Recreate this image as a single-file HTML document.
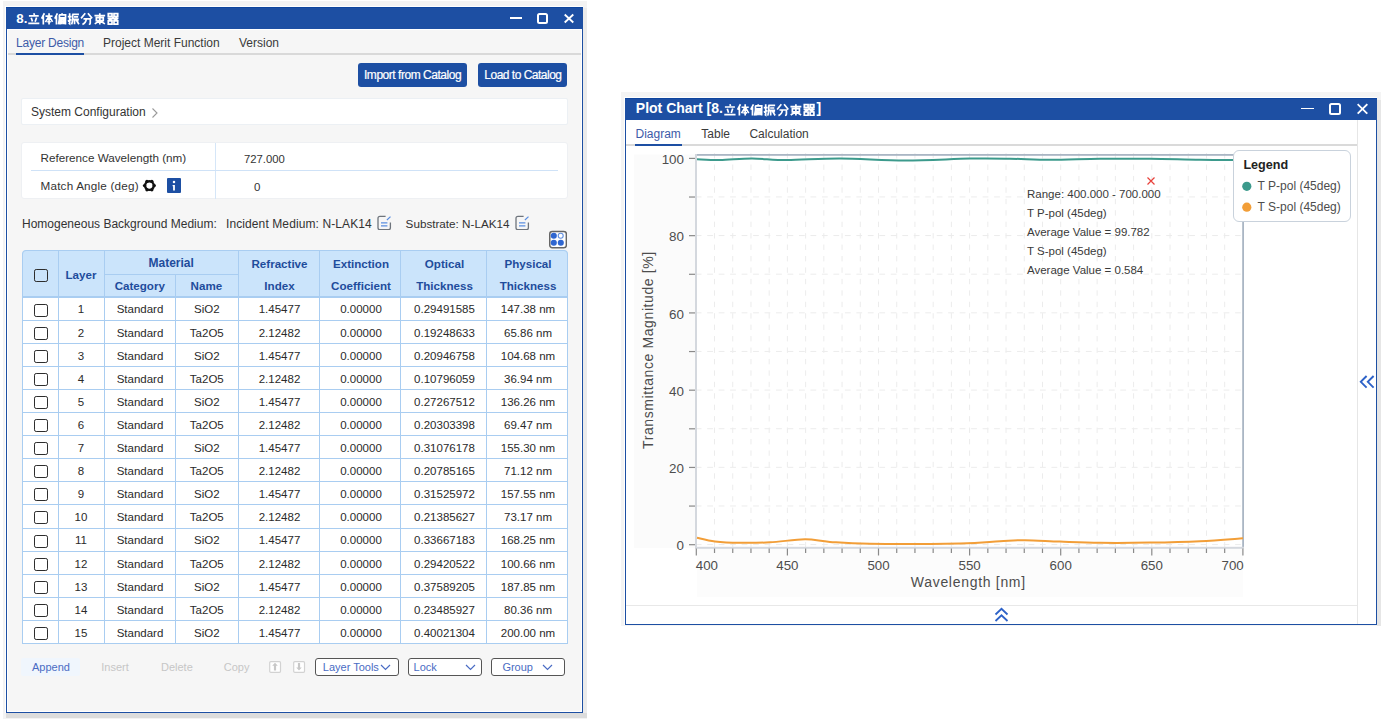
<!DOCTYPE html>
<html><head><meta charset="utf-8">
<style>
*{box-sizing:border-box;margin:0;padding:0}
html,body{width:1384px;height:723px;overflow:hidden;background:#fff;font-family:"Liberation Sans", sans-serif;}
.a{position:absolute;white-space:nowrap}
.t{position:absolute;white-space:nowrap;line-height:1;}
</style></head><body>

<div class="a" style="left:3px;top:1px;width:584px;height:718px;background:#f3f3f3"></div>
<div class="a" style="left:6px;top:713px;width:581px;height:5px;background:#dcdcdc"></div>
<div class="a" style="left:583px;top:8px;width:4px;height:705px;background:#ebebeb"></div>
<div class="a" style="left:5px;top:6px;width:578px;height:707px;background:#fff"></div>
<div class="a" style="left:6px;top:7px;width:577px;height:706px;background:#1d4fa3"></div>
<div class="a" style="left:6px;top:7px;width:577px;height:1px;background:#0e459e"></div>
<div class="a" style="left:7px;top:29px;width:575px;height:683px;background:#fff"></div>
<div class="a" style="left:8px;top:30px;width:573px;height:681px;background:#f6f6f6"></div>
<div class="t" style="left:16.30px;top:11.54px;font-size:13.3px;color:#fff;font-weight:bold;letter-spacing:0px;">8.</div>
<svg class="a" style="left:28.4px;top:13.0px;overflow:visible" width="82.4" height="12.5"><g transform="scale(0.8923076923076922)" fill="none" stroke="#fff" stroke-width="1.91" stroke-linecap="butt"><path transform="translate(0.00,0)" d="M6.5 0.3 L7.2 2.2 M1 3.3 H12 M3.6 5.2 L5 9.6 M9.6 5 L8 9.8 M0.3 11.6 H12.7"/><path transform="translate(14.79,0)" d="M3.6 0.3 L0.4 6.2 M2.4 3.6 V12.8 M4.8 3.6 H12.7 M8.8 0.3 V12.8 M8.6 3.8 L4.8 10.2 M9 3.8 L12.7 10 M6.8 9.8 H10.8"/><path transform="translate(29.59,0)" d="M3.4 0.3 L0.4 6.2 M2.3 3.6 V12.8 M8.6 0.3 V1.8 M5.3 2 H12.5 V5.4 H5.6 M5.6 2 V6.5 L4.6 12.8 M6.6 7 H12.4 V12.8 M6.6 7 V12.8 M8.5 7 V12.5 M10.5 7 V12.5 M6.6 9.7 H12.4"/><path transform="translate(44.38,0)" d="M0.2 4 H4.4 M2.3 0.3 V12.2 L1.2 11.4 M0.2 9.2 L4.4 7.2 M5.2 1.5 H12.7 M5.7 1.5 V8 L4.6 12.8 M7.2 4.4 H11.8 M6.6 7 H12.7 M7.8 7 V12.6 M9.2 7 L12.7 12.6 M12.2 8.2 L10.2 9.8"/><path transform="translate(59.17,0)" d="M5 0.3 L0.3 6 M8 0.3 L12.7 6 M3 6.6 H10.6 V11.4 Q10.6 12.6 9 12.6 M6.2 6.6 Q5.8 11 1.8 12.8"/><path transform="translate(73.97,0)" d="M0.5 3 H12.5 M6.5 0.3 V12.8 M2.6 5.1 H10.4 V8.6 H2.6 Z M6.4 8.6 L0.8 12.2 M6.6 8.6 L12.2 12.2"/><path transform="translate(88.76,0)" d="M1.2 0.6 H5.4 V3.8 H1.2 Z M7.6 0.6 H11.8 V3.8 H7.6 Z M0.4 6 H12.6 M6.5 3.8 V6 L1.5 8.2 M6.5 6 L11.5 8.2 M9.6 4.4 L10.6 5.4 M1.2 8.8 H5.4 V12.4 H1.2 Z M7.6 8.8 H11.8 V12.4 H7.6 Z"/></g></svg>
<div class="a" style="left:509.8px;top:17.1px;width:12.3px;height:1.6px;background:#fff"></div>
<div class="a" style="left:537px;top:12.6px;width:11.4px;height:11.4px;border:2px solid #fff;border-radius:2.5px"></div>
<svg class="a" style="left:563px;top:13px" width="12" height="11" viewBox="0 0 12 11"><path d="M1.7 1.5 L10.3 9.5 M10.3 1.5 L1.7 9.5" stroke="#fff" stroke-width="1.8"/></svg>
<div class="a" style="left:8px;top:53px;width:573px;height:2px;background:#d9d9d9"></div>
<div class="t" style="left:16.00px;top:36.64px;font-size:12px;color:#3d5ba8;font-weight:normal;letter-spacing:-0.22px;">Layer Design</div>
<div class="a" style="left:16px;top:53px;width:68px;height:2px;background:#1d4fa3"></div>
<div class="t" style="left:103.00px;top:36.64px;font-size:12px;color:#3a3a3a;font-weight:normal;letter-spacing:0px;">Project Merit Function</div>
<div class="t" style="left:239.00px;top:36.64px;font-size:12px;color:#3a3a3a;font-weight:normal;letter-spacing:0px;">Version</div>
<div class="a" style="left:358px;top:63px;width:109px;height:24px;background:#1d4fa3;border-radius:3px"></div>
<div class="t" style="left:364.00px;top:68.94px;font-size:12px;color:#fff;font-weight:normal;letter-spacing:-0.47px;-webkit-text-stroke:0.2px #fff">Import from Catalog</div>
<div class="a" style="left:478px;top:63px;width:89px;height:24px;background:#1d4fa3;border-radius:3px"></div>
<div class="t" style="left:484.30px;top:68.94px;font-size:12px;color:#fff;font-weight:normal;letter-spacing:-0.5px;-webkit-text-stroke:0.2px #fff">Load to Catalog</div>
<div class="a" style="left:21px;top:98px;width:547px;height:27px;background:#fff;border:1px solid #ecf0f4;border-radius:2px"></div>
<div class="t" style="left:31.00px;top:105.84px;font-size:12px;color:#333;font-weight:normal;letter-spacing:0px;">System Configuration</div>
<svg class="a" style="left:150px;top:107px" width="10" height="12" viewBox="0 0 10 12"><path d="M2.5 1.5 L7 6 L2.5 10.5" stroke="#9a9a9a" stroke-width="1.1" fill="none"/></svg>
<div class="a" style="left:21px;top:142px;width:547px;height:57px;background:#fff;border:1px solid #eef0f3;border-radius:3px"></div>
<div class="a" style="left:215px;top:143px;width:1px;height:56px;background:#d5e6f8"></div>
<div class="a" style="left:31px;top:170px;width:527px;height:1px;background:#cfe2f7"></div>
<div class="t" style="left:40.50px;top:152.10px;font-size:11.7px;color:#333;font-weight:normal;letter-spacing:0px;">Reference Wavelength (nm)</div>
<div class="t" style="left:244.00px;top:154.13px;font-size:11.3px;color:#333;font-weight:normal;letter-spacing:0px;">727.000</div>
<div class="t" style="left:40.50px;top:179.70px;font-size:11.7px;color:#333;font-weight:normal;letter-spacing:0.2px;">Match Angle (deg)</div>
<div class="t" style="left:254.00px;top:181.87px;font-size:11.5px;color:#333;font-weight:normal;letter-spacing:0px;">0</div>
<svg class="a" style="left:0;top:0" width="300" height="300"><circle cx="154.30" cy="185.60" r="1.65" fill="#111"/><circle cx="151.85" cy="189.84" r="1.65" fill="#111"/><circle cx="146.95" cy="189.84" r="1.65" fill="#111"/><circle cx="144.50" cy="185.60" r="1.65" fill="#111"/><circle cx="146.95" cy="181.36" r="1.65" fill="#111"/><circle cx="151.85" cy="181.36" r="1.65" fill="#111"/><circle cx="149.4" cy="185.6" r="4.3" fill="none" stroke="#111" stroke-width="2.4"/></svg>
<div class="a" style="left:166.5px;top:178.4px;width:14.2px;height:14.3px;background:#1d4fa3;border-radius:1px"></div>
<svg class="a" style="left:166.5px;top:178.4px" width="15" height="15"><circle cx="7" cy="4.1" r="1.25" fill="#fff"/><path d="M5.6 7 H7.9 V12.5 H6.1 V8.3 H5.6 Z" fill="#fff"/></svg>
<div class="t" style="left:22.00px;top:217.64px;font-size:12px;color:#333;font-weight:normal;letter-spacing:0px;">Homogeneous Background Medium:</div>
<div class="t" style="left:226.00px;top:217.64px;font-size:12px;color:#333;font-weight:normal;letter-spacing:0.1px;">Incident Medium: N-LAK14</div>
<div class="t" style="left:405.60px;top:217.90px;font-size:11.7px;color:#333;font-weight:normal;letter-spacing:0px;">Substrate: N-LAK14</div>
<svg class="a" style="left:376.5px;top:214.5px" width="15" height="15" viewBox="0 0 15 15"><path d="M8.6 1.4 H3 Q1 1.4 1 3.4 V12.7 Q1 14.7 3 14.7 H11.4 Q13.4 14.7 13.4 12.7 V7.5" stroke="#6e747c" stroke-width="1.3" fill="none"/><path d="M9.9 5 L13.5 1.6" stroke="#5b8ee0" stroke-width="1.2"/><path d="M4 7.9 H10.4 M4 10.9 H10.4" stroke="#5b8ee0" stroke-width="1.2"/></svg>
<svg class="a" style="left:514.8px;top:214.5px" width="15" height="15" viewBox="0 0 15 15"><path d="M8.6 1.4 H3 Q1 1.4 1 3.4 V12.7 Q1 14.7 3 14.7 H11.4 Q13.4 14.7 13.4 12.7 V7.5" stroke="#6e747c" stroke-width="1.3" fill="none"/><path d="M9.9 5 L13.5 1.6" stroke="#5b8ee0" stroke-width="1.2"/><path d="M4 7.9 H10.4 M4 10.9 H10.4" stroke="#5b8ee0" stroke-width="1.2"/></svg>
<svg class="a" style="left:548px;top:230px" width="19" height="19" viewBox="0 0 19 19"><rect x="1.75" y="1.4" width="16.6" height="16.4" rx="2.5" fill="#fff" stroke="#666" stroke-width="1.5"/><circle cx="5.8" cy="5.8" r="3.05" fill="#2f66d0"/><circle cx="12.7" cy="5.8" r="2.5" fill="#fff" stroke="#5f8ee0" stroke-width="1.1"/><circle cx="5.8" cy="12.7" r="3.05" fill="#2f66d0"/><circle cx="12.8" cy="12.7" r="3.05" fill="#2f66d0"/></svg>
<div class="a" style="left:22px;top:250px;width:546px;height:394px;background:#fff;border:1px solid #a9cdf1;border-radius:4px 4px 0 0"></div>
<div class="a" style="left:22px;top:250px;width:546px;height:48px;background:#cbe4fb;border:1px solid #a9cdf1;border-radius:4px 4px 0 0"></div>
<div class="a" style="left:22px;top:296px;width:546px;height:1px;background:#a9cdf1"></div>
<div class="a" style="left:58px;top:250px;width:1px;height:393px;background:#a9cdf1"></div>
<div class="a" style="left:104px;top:250px;width:1px;height:393px;background:#a9cdf1"></div>
<div class="a" style="left:175px;top:274px;width:1px;height:369px;background:#a9cdf1"></div>
<div class="a" style="left:238px;top:250px;width:1px;height:393px;background:#a9cdf1"></div>
<div class="a" style="left:319px;top:250px;width:1px;height:393px;background:#a9cdf1"></div>
<div class="a" style="left:400px;top:250px;width:1px;height:393px;background:#a9cdf1"></div>
<div class="a" style="left:486px;top:250px;width:1px;height:393px;background:#a9cdf1"></div>
<div class="a" style="left:104px;top:274px;width:134px;height:1px;background:#a9cdf1"></div>
<div class="a" style="left:22px;top:297px;width:546px;height:1px;background:#a9cdf1"></div>
<div class="a" style="left:22px;top:320px;width:546px;height:1px;background:#a9cdf1"></div>
<div class="a" style="left:22px;top:343px;width:546px;height:1px;background:#a9cdf1"></div>
<div class="a" style="left:22px;top:366px;width:546px;height:1px;background:#a9cdf1"></div>
<div class="a" style="left:22px;top:389px;width:546px;height:1px;background:#a9cdf1"></div>
<div class="a" style="left:22px;top:412px;width:546px;height:1px;background:#a9cdf1"></div>
<div class="a" style="left:22px;top:435px;width:546px;height:1px;background:#a9cdf1"></div>
<div class="a" style="left:22px;top:458px;width:546px;height:1px;background:#a9cdf1"></div>
<div class="a" style="left:22px;top:481px;width:546px;height:1px;background:#a9cdf1"></div>
<div class="a" style="left:22px;top:504px;width:546px;height:1px;background:#a9cdf1"></div>
<div class="a" style="left:22px;top:528px;width:546px;height:1px;background:#a9cdf1"></div>
<div class="a" style="left:22px;top:551px;width:546px;height:1px;background:#a9cdf1"></div>
<div class="a" style="left:22px;top:574px;width:546px;height:1px;background:#a9cdf1"></div>
<div class="a" style="left:22px;top:597px;width:546px;height:1px;background:#a9cdf1"></div>
<div class="a" style="left:22px;top:620px;width:546px;height:1px;background:#a9cdf1"></div>
<div class="a" style="left:22px;top:643px;width:546px;height:1px;background:#a9cdf1"></div>
<div class="a" style="left:33.8px;top:268.6px;width:14px;height:13.4px;border:1.8px solid #2d2d2d;border-radius:2.2px;background:transparent"></div>
<div class="t" style="left:-19.00px;top:268.98px;width:200px;text-align:center;font-size:11.6px;color:#1f4c9c;font-weight:bold;letter-spacing:0px">Layer</div>
<div class="t" style="left:71.20px;top:256.94px;width:200px;text-align:center;font-size:12px;color:#1f4c9c;font-weight:bold;letter-spacing:0px">Material</div>
<div class="t" style="left:39.80px;top:280.08px;width:200px;text-align:center;font-size:11.6px;color:#1f4c9c;font-weight:bold;letter-spacing:0px">Category</div>
<div class="t" style="left:106.40px;top:280.08px;width:200px;text-align:center;font-size:11.6px;color:#1f4c9c;font-weight:bold;letter-spacing:0px">Name</div>
<div class="t" style="left:179.50px;top:258.18px;width:200px;text-align:center;font-size:11.6px;color:#1f4c9c;font-weight:bold;letter-spacing:0px">Refractive</div>
<div class="t" style="left:179.50px;top:280.08px;width:200px;text-align:center;font-size:11.6px;color:#1f4c9c;font-weight:bold;letter-spacing:0px">Index</div>
<div class="t" style="left:261.00px;top:258.18px;width:200px;text-align:center;font-size:11.6px;color:#1f4c9c;font-weight:bold;letter-spacing:0px">Extinction</div>
<div class="t" style="left:261.00px;top:280.08px;width:200px;text-align:center;font-size:11.6px;color:#1f4c9c;font-weight:bold;letter-spacing:0px">Coefficient</div>
<div class="t" style="left:344.50px;top:258.18px;width:200px;text-align:center;font-size:11.6px;color:#1f4c9c;font-weight:bold;letter-spacing:0px">Optical</div>
<div class="t" style="left:344.50px;top:280.08px;width:200px;text-align:center;font-size:11.6px;color:#1f4c9c;font-weight:bold;letter-spacing:0px">Thickness</div>
<div class="t" style="left:428.00px;top:258.18px;width:200px;text-align:center;font-size:11.6px;color:#1f4c9c;font-weight:bold;letter-spacing:0px">Physical</div>
<div class="t" style="left:428.00px;top:280.08px;width:200px;text-align:center;font-size:11.6px;color:#1f4c9c;font-weight:bold;letter-spacing:0px">Thickness</div>
<div class="a" style="left:33.9px;top:303.8px;width:14px;height:13.4px;border:1.8px solid #2d2d2d;border-radius:2.2px;background:#fff"></div>
<div class="t" style="left:-19.00px;top:304.47px;width:200px;text-align:center;font-size:11.5px;color:#2a2a2a;font-weight:normal;letter-spacing:0px">1</div>
<div class="t" style="left:40.00px;top:304.47px;width:200px;text-align:center;font-size:11.5px;color:#2a2a2a;font-weight:normal;letter-spacing:0px">Standard</div>
<div class="t" style="left:106.80px;top:304.47px;width:200px;text-align:center;font-size:11.5px;color:#2a2a2a;font-weight:normal;letter-spacing:0px">SiO2</div>
<div class="t" style="left:179.50px;top:304.47px;width:200px;text-align:center;font-size:11.5px;color:#2a2a2a;font-weight:normal;letter-spacing:0px">1.45477</div>
<div class="t" style="left:261.00px;top:304.47px;width:200px;text-align:center;font-size:11.5px;color:#2a2a2a;font-weight:normal;letter-spacing:0px">0.00000</div>
<div class="t" style="left:344.50px;top:304.47px;width:200px;text-align:center;font-size:11.5px;color:#2a2a2a;font-weight:normal;letter-spacing:0px">0.29491585</div>
<div class="t" style="left:428.00px;top:304.47px;width:200px;text-align:center;font-size:11.5px;color:#2a2a2a;font-weight:normal;letter-spacing:0px">147.38 nm</div>
<div class="a" style="left:33.9px;top:326.8px;width:14px;height:13.4px;border:1.8px solid #2d2d2d;border-radius:2.2px;background:#fff"></div>
<div class="t" style="left:-19.00px;top:327.57px;width:200px;text-align:center;font-size:11.5px;color:#2a2a2a;font-weight:normal;letter-spacing:0px">2</div>
<div class="t" style="left:40.00px;top:327.57px;width:200px;text-align:center;font-size:11.5px;color:#2a2a2a;font-weight:normal;letter-spacing:0px">Standard</div>
<div class="t" style="left:106.80px;top:327.57px;width:200px;text-align:center;font-size:11.5px;color:#2a2a2a;font-weight:normal;letter-spacing:0px">Ta2O5</div>
<div class="t" style="left:179.50px;top:327.57px;width:200px;text-align:center;font-size:11.5px;color:#2a2a2a;font-weight:normal;letter-spacing:0px">2.12482</div>
<div class="t" style="left:261.00px;top:327.57px;width:200px;text-align:center;font-size:11.5px;color:#2a2a2a;font-weight:normal;letter-spacing:0px">0.00000</div>
<div class="t" style="left:344.50px;top:327.57px;width:200px;text-align:center;font-size:11.5px;color:#2a2a2a;font-weight:normal;letter-spacing:0px">0.19248633</div>
<div class="t" style="left:428.00px;top:327.57px;width:200px;text-align:center;font-size:11.5px;color:#2a2a2a;font-weight:normal;letter-spacing:0px">65.86 nm</div>
<div class="a" style="left:33.9px;top:349.8px;width:14px;height:13.4px;border:1.8px solid #2d2d2d;border-radius:2.2px;background:#fff"></div>
<div class="t" style="left:-19.00px;top:350.67px;width:200px;text-align:center;font-size:11.5px;color:#2a2a2a;font-weight:normal;letter-spacing:0px">3</div>
<div class="t" style="left:40.00px;top:350.67px;width:200px;text-align:center;font-size:11.5px;color:#2a2a2a;font-weight:normal;letter-spacing:0px">Standard</div>
<div class="t" style="left:106.80px;top:350.67px;width:200px;text-align:center;font-size:11.5px;color:#2a2a2a;font-weight:normal;letter-spacing:0px">SiO2</div>
<div class="t" style="left:179.50px;top:350.67px;width:200px;text-align:center;font-size:11.5px;color:#2a2a2a;font-weight:normal;letter-spacing:0px">1.45477</div>
<div class="t" style="left:261.00px;top:350.67px;width:200px;text-align:center;font-size:11.5px;color:#2a2a2a;font-weight:normal;letter-spacing:0px">0.00000</div>
<div class="t" style="left:344.50px;top:350.67px;width:200px;text-align:center;font-size:11.5px;color:#2a2a2a;font-weight:normal;letter-spacing:0px">0.20946758</div>
<div class="t" style="left:428.00px;top:350.67px;width:200px;text-align:center;font-size:11.5px;color:#2a2a2a;font-weight:normal;letter-spacing:0px">104.68 nm</div>
<div class="a" style="left:33.9px;top:372.8px;width:14px;height:13.4px;border:1.8px solid #2d2d2d;border-radius:2.2px;background:#fff"></div>
<div class="t" style="left:-19.00px;top:373.77px;width:200px;text-align:center;font-size:11.5px;color:#2a2a2a;font-weight:normal;letter-spacing:0px">4</div>
<div class="t" style="left:40.00px;top:373.77px;width:200px;text-align:center;font-size:11.5px;color:#2a2a2a;font-weight:normal;letter-spacing:0px">Standard</div>
<div class="t" style="left:106.80px;top:373.77px;width:200px;text-align:center;font-size:11.5px;color:#2a2a2a;font-weight:normal;letter-spacing:0px">Ta2O5</div>
<div class="t" style="left:179.50px;top:373.77px;width:200px;text-align:center;font-size:11.5px;color:#2a2a2a;font-weight:normal;letter-spacing:0px">2.12482</div>
<div class="t" style="left:261.00px;top:373.77px;width:200px;text-align:center;font-size:11.5px;color:#2a2a2a;font-weight:normal;letter-spacing:0px">0.00000</div>
<div class="t" style="left:344.50px;top:373.77px;width:200px;text-align:center;font-size:11.5px;color:#2a2a2a;font-weight:normal;letter-spacing:0px">0.10796059</div>
<div class="t" style="left:428.00px;top:373.77px;width:200px;text-align:center;font-size:11.5px;color:#2a2a2a;font-weight:normal;letter-spacing:0px">36.94 nm</div>
<div class="a" style="left:33.9px;top:395.8px;width:14px;height:13.4px;border:1.8px solid #2d2d2d;border-radius:2.2px;background:#fff"></div>
<div class="t" style="left:-19.00px;top:396.87px;width:200px;text-align:center;font-size:11.5px;color:#2a2a2a;font-weight:normal;letter-spacing:0px">5</div>
<div class="t" style="left:40.00px;top:396.87px;width:200px;text-align:center;font-size:11.5px;color:#2a2a2a;font-weight:normal;letter-spacing:0px">Standard</div>
<div class="t" style="left:106.80px;top:396.87px;width:200px;text-align:center;font-size:11.5px;color:#2a2a2a;font-weight:normal;letter-spacing:0px">SiO2</div>
<div class="t" style="left:179.50px;top:396.87px;width:200px;text-align:center;font-size:11.5px;color:#2a2a2a;font-weight:normal;letter-spacing:0px">1.45477</div>
<div class="t" style="left:261.00px;top:396.87px;width:200px;text-align:center;font-size:11.5px;color:#2a2a2a;font-weight:normal;letter-spacing:0px">0.00000</div>
<div class="t" style="left:344.50px;top:396.87px;width:200px;text-align:center;font-size:11.5px;color:#2a2a2a;font-weight:normal;letter-spacing:0px">0.27267512</div>
<div class="t" style="left:428.00px;top:396.87px;width:200px;text-align:center;font-size:11.5px;color:#2a2a2a;font-weight:normal;letter-spacing:0px">136.26 nm</div>
<div class="a" style="left:33.9px;top:418.8px;width:14px;height:13.4px;border:1.8px solid #2d2d2d;border-radius:2.2px;background:#fff"></div>
<div class="t" style="left:-19.00px;top:419.97px;width:200px;text-align:center;font-size:11.5px;color:#2a2a2a;font-weight:normal;letter-spacing:0px">6</div>
<div class="t" style="left:40.00px;top:419.97px;width:200px;text-align:center;font-size:11.5px;color:#2a2a2a;font-weight:normal;letter-spacing:0px">Standard</div>
<div class="t" style="left:106.80px;top:419.97px;width:200px;text-align:center;font-size:11.5px;color:#2a2a2a;font-weight:normal;letter-spacing:0px">Ta2O5</div>
<div class="t" style="left:179.50px;top:419.97px;width:200px;text-align:center;font-size:11.5px;color:#2a2a2a;font-weight:normal;letter-spacing:0px">2.12482</div>
<div class="t" style="left:261.00px;top:419.97px;width:200px;text-align:center;font-size:11.5px;color:#2a2a2a;font-weight:normal;letter-spacing:0px">0.00000</div>
<div class="t" style="left:344.50px;top:419.97px;width:200px;text-align:center;font-size:11.5px;color:#2a2a2a;font-weight:normal;letter-spacing:0px">0.20303398</div>
<div class="t" style="left:428.00px;top:419.97px;width:200px;text-align:center;font-size:11.5px;color:#2a2a2a;font-weight:normal;letter-spacing:0px">69.47 nm</div>
<div class="a" style="left:33.9px;top:441.8px;width:14px;height:13.4px;border:1.8px solid #2d2d2d;border-radius:2.2px;background:#fff"></div>
<div class="t" style="left:-19.00px;top:443.07px;width:200px;text-align:center;font-size:11.5px;color:#2a2a2a;font-weight:normal;letter-spacing:0px">7</div>
<div class="t" style="left:40.00px;top:443.07px;width:200px;text-align:center;font-size:11.5px;color:#2a2a2a;font-weight:normal;letter-spacing:0px">Standard</div>
<div class="t" style="left:106.80px;top:443.07px;width:200px;text-align:center;font-size:11.5px;color:#2a2a2a;font-weight:normal;letter-spacing:0px">SiO2</div>
<div class="t" style="left:179.50px;top:443.07px;width:200px;text-align:center;font-size:11.5px;color:#2a2a2a;font-weight:normal;letter-spacing:0px">1.45477</div>
<div class="t" style="left:261.00px;top:443.07px;width:200px;text-align:center;font-size:11.5px;color:#2a2a2a;font-weight:normal;letter-spacing:0px">0.00000</div>
<div class="t" style="left:344.50px;top:443.07px;width:200px;text-align:center;font-size:11.5px;color:#2a2a2a;font-weight:normal;letter-spacing:0px">0.31076178</div>
<div class="t" style="left:428.00px;top:443.07px;width:200px;text-align:center;font-size:11.5px;color:#2a2a2a;font-weight:normal;letter-spacing:0px">155.30 nm</div>
<div class="a" style="left:33.9px;top:464.8px;width:14px;height:13.4px;border:1.8px solid #2d2d2d;border-radius:2.2px;background:#fff"></div>
<div class="t" style="left:-19.00px;top:466.17px;width:200px;text-align:center;font-size:11.5px;color:#2a2a2a;font-weight:normal;letter-spacing:0px">8</div>
<div class="t" style="left:40.00px;top:466.17px;width:200px;text-align:center;font-size:11.5px;color:#2a2a2a;font-weight:normal;letter-spacing:0px">Standard</div>
<div class="t" style="left:106.80px;top:466.17px;width:200px;text-align:center;font-size:11.5px;color:#2a2a2a;font-weight:normal;letter-spacing:0px">Ta2O5</div>
<div class="t" style="left:179.50px;top:466.17px;width:200px;text-align:center;font-size:11.5px;color:#2a2a2a;font-weight:normal;letter-spacing:0px">2.12482</div>
<div class="t" style="left:261.00px;top:466.17px;width:200px;text-align:center;font-size:11.5px;color:#2a2a2a;font-weight:normal;letter-spacing:0px">0.00000</div>
<div class="t" style="left:344.50px;top:466.17px;width:200px;text-align:center;font-size:11.5px;color:#2a2a2a;font-weight:normal;letter-spacing:0px">0.20785165</div>
<div class="t" style="left:428.00px;top:466.17px;width:200px;text-align:center;font-size:11.5px;color:#2a2a2a;font-weight:normal;letter-spacing:0px">71.12 nm</div>
<div class="a" style="left:33.9px;top:487.8px;width:14px;height:13.4px;border:1.8px solid #2d2d2d;border-radius:2.2px;background:#fff"></div>
<div class="t" style="left:-19.00px;top:489.27px;width:200px;text-align:center;font-size:11.5px;color:#2a2a2a;font-weight:normal;letter-spacing:0px">9</div>
<div class="t" style="left:40.00px;top:489.27px;width:200px;text-align:center;font-size:11.5px;color:#2a2a2a;font-weight:normal;letter-spacing:0px">Standard</div>
<div class="t" style="left:106.80px;top:489.27px;width:200px;text-align:center;font-size:11.5px;color:#2a2a2a;font-weight:normal;letter-spacing:0px">SiO2</div>
<div class="t" style="left:179.50px;top:489.27px;width:200px;text-align:center;font-size:11.5px;color:#2a2a2a;font-weight:normal;letter-spacing:0px">1.45477</div>
<div class="t" style="left:261.00px;top:489.27px;width:200px;text-align:center;font-size:11.5px;color:#2a2a2a;font-weight:normal;letter-spacing:0px">0.00000</div>
<div class="t" style="left:344.50px;top:489.27px;width:200px;text-align:center;font-size:11.5px;color:#2a2a2a;font-weight:normal;letter-spacing:0px">0.31525972</div>
<div class="t" style="left:428.00px;top:489.27px;width:200px;text-align:center;font-size:11.5px;color:#2a2a2a;font-weight:normal;letter-spacing:0px">157.55 nm</div>
<div class="a" style="left:33.9px;top:510.8px;width:14px;height:13.4px;border:1.8px solid #2d2d2d;border-radius:2.2px;background:#fff"></div>
<div class="t" style="left:-19.00px;top:512.37px;width:200px;text-align:center;font-size:11.5px;color:#2a2a2a;font-weight:normal;letter-spacing:0px">10</div>
<div class="t" style="left:40.00px;top:512.37px;width:200px;text-align:center;font-size:11.5px;color:#2a2a2a;font-weight:normal;letter-spacing:0px">Standard</div>
<div class="t" style="left:106.80px;top:512.37px;width:200px;text-align:center;font-size:11.5px;color:#2a2a2a;font-weight:normal;letter-spacing:0px">Ta2O5</div>
<div class="t" style="left:179.50px;top:512.37px;width:200px;text-align:center;font-size:11.5px;color:#2a2a2a;font-weight:normal;letter-spacing:0px">2.12482</div>
<div class="t" style="left:261.00px;top:512.37px;width:200px;text-align:center;font-size:11.5px;color:#2a2a2a;font-weight:normal;letter-spacing:0px">0.00000</div>
<div class="t" style="left:344.50px;top:512.37px;width:200px;text-align:center;font-size:11.5px;color:#2a2a2a;font-weight:normal;letter-spacing:0px">0.21385627</div>
<div class="t" style="left:428.00px;top:512.37px;width:200px;text-align:center;font-size:11.5px;color:#2a2a2a;font-weight:normal;letter-spacing:0px">73.17 nm</div>
<div class="a" style="left:33.9px;top:534.8px;width:14px;height:13.4px;border:1.8px solid #2d2d2d;border-radius:2.2px;background:#fff"></div>
<div class="t" style="left:-19.00px;top:535.47px;width:200px;text-align:center;font-size:11.5px;color:#2a2a2a;font-weight:normal;letter-spacing:0px">11</div>
<div class="t" style="left:40.00px;top:535.47px;width:200px;text-align:center;font-size:11.5px;color:#2a2a2a;font-weight:normal;letter-spacing:0px">Standard</div>
<div class="t" style="left:106.80px;top:535.47px;width:200px;text-align:center;font-size:11.5px;color:#2a2a2a;font-weight:normal;letter-spacing:0px">SiO2</div>
<div class="t" style="left:179.50px;top:535.47px;width:200px;text-align:center;font-size:11.5px;color:#2a2a2a;font-weight:normal;letter-spacing:0px">1.45477</div>
<div class="t" style="left:261.00px;top:535.47px;width:200px;text-align:center;font-size:11.5px;color:#2a2a2a;font-weight:normal;letter-spacing:0px">0.00000</div>
<div class="t" style="left:344.50px;top:535.47px;width:200px;text-align:center;font-size:11.5px;color:#2a2a2a;font-weight:normal;letter-spacing:0px">0.33667183</div>
<div class="t" style="left:428.00px;top:535.47px;width:200px;text-align:center;font-size:11.5px;color:#2a2a2a;font-weight:normal;letter-spacing:0px">168.25 nm</div>
<div class="a" style="left:33.9px;top:557.8px;width:14px;height:13.4px;border:1.8px solid #2d2d2d;border-radius:2.2px;background:#fff"></div>
<div class="t" style="left:-19.00px;top:558.57px;width:200px;text-align:center;font-size:11.5px;color:#2a2a2a;font-weight:normal;letter-spacing:0px">12</div>
<div class="t" style="left:40.00px;top:558.57px;width:200px;text-align:center;font-size:11.5px;color:#2a2a2a;font-weight:normal;letter-spacing:0px">Standard</div>
<div class="t" style="left:106.80px;top:558.57px;width:200px;text-align:center;font-size:11.5px;color:#2a2a2a;font-weight:normal;letter-spacing:0px">Ta2O5</div>
<div class="t" style="left:179.50px;top:558.57px;width:200px;text-align:center;font-size:11.5px;color:#2a2a2a;font-weight:normal;letter-spacing:0px">2.12482</div>
<div class="t" style="left:261.00px;top:558.57px;width:200px;text-align:center;font-size:11.5px;color:#2a2a2a;font-weight:normal;letter-spacing:0px">0.00000</div>
<div class="t" style="left:344.50px;top:558.57px;width:200px;text-align:center;font-size:11.5px;color:#2a2a2a;font-weight:normal;letter-spacing:0px">0.29420522</div>
<div class="t" style="left:428.00px;top:558.57px;width:200px;text-align:center;font-size:11.5px;color:#2a2a2a;font-weight:normal;letter-spacing:0px">100.66 nm</div>
<div class="a" style="left:33.9px;top:580.8px;width:14px;height:13.4px;border:1.8px solid #2d2d2d;border-radius:2.2px;background:#fff"></div>
<div class="t" style="left:-19.00px;top:581.67px;width:200px;text-align:center;font-size:11.5px;color:#2a2a2a;font-weight:normal;letter-spacing:0px">13</div>
<div class="t" style="left:40.00px;top:581.67px;width:200px;text-align:center;font-size:11.5px;color:#2a2a2a;font-weight:normal;letter-spacing:0px">Standard</div>
<div class="t" style="left:106.80px;top:581.67px;width:200px;text-align:center;font-size:11.5px;color:#2a2a2a;font-weight:normal;letter-spacing:0px">SiO2</div>
<div class="t" style="left:179.50px;top:581.67px;width:200px;text-align:center;font-size:11.5px;color:#2a2a2a;font-weight:normal;letter-spacing:0px">1.45477</div>
<div class="t" style="left:261.00px;top:581.67px;width:200px;text-align:center;font-size:11.5px;color:#2a2a2a;font-weight:normal;letter-spacing:0px">0.00000</div>
<div class="t" style="left:344.50px;top:581.67px;width:200px;text-align:center;font-size:11.5px;color:#2a2a2a;font-weight:normal;letter-spacing:0px">0.37589205</div>
<div class="t" style="left:428.00px;top:581.67px;width:200px;text-align:center;font-size:11.5px;color:#2a2a2a;font-weight:normal;letter-spacing:0px">187.85 nm</div>
<div class="a" style="left:33.9px;top:603.8px;width:14px;height:13.4px;border:1.8px solid #2d2d2d;border-radius:2.2px;background:#fff"></div>
<div class="t" style="left:-19.00px;top:604.77px;width:200px;text-align:center;font-size:11.5px;color:#2a2a2a;font-weight:normal;letter-spacing:0px">14</div>
<div class="t" style="left:40.00px;top:604.77px;width:200px;text-align:center;font-size:11.5px;color:#2a2a2a;font-weight:normal;letter-spacing:0px">Standard</div>
<div class="t" style="left:106.80px;top:604.77px;width:200px;text-align:center;font-size:11.5px;color:#2a2a2a;font-weight:normal;letter-spacing:0px">Ta2O5</div>
<div class="t" style="left:179.50px;top:604.77px;width:200px;text-align:center;font-size:11.5px;color:#2a2a2a;font-weight:normal;letter-spacing:0px">2.12482</div>
<div class="t" style="left:261.00px;top:604.77px;width:200px;text-align:center;font-size:11.5px;color:#2a2a2a;font-weight:normal;letter-spacing:0px">0.00000</div>
<div class="t" style="left:344.50px;top:604.77px;width:200px;text-align:center;font-size:11.5px;color:#2a2a2a;font-weight:normal;letter-spacing:0px">0.23485927</div>
<div class="t" style="left:428.00px;top:604.77px;width:200px;text-align:center;font-size:11.5px;color:#2a2a2a;font-weight:normal;letter-spacing:0px">80.36 nm</div>
<div class="a" style="left:33.9px;top:626.8px;width:14px;height:13.4px;border:1.8px solid #2d2d2d;border-radius:2.2px;background:#fff"></div>
<div class="t" style="left:-19.00px;top:627.87px;width:200px;text-align:center;font-size:11.5px;color:#2a2a2a;font-weight:normal;letter-spacing:0px">15</div>
<div class="t" style="left:40.00px;top:627.87px;width:200px;text-align:center;font-size:11.5px;color:#2a2a2a;font-weight:normal;letter-spacing:0px">Standard</div>
<div class="t" style="left:106.80px;top:627.87px;width:200px;text-align:center;font-size:11.5px;color:#2a2a2a;font-weight:normal;letter-spacing:0px">SiO2</div>
<div class="t" style="left:179.50px;top:627.87px;width:200px;text-align:center;font-size:11.5px;color:#2a2a2a;font-weight:normal;letter-spacing:0px">1.45477</div>
<div class="t" style="left:261.00px;top:627.87px;width:200px;text-align:center;font-size:11.5px;color:#2a2a2a;font-weight:normal;letter-spacing:0px">0.00000</div>
<div class="t" style="left:344.50px;top:627.87px;width:200px;text-align:center;font-size:11.5px;color:#2a2a2a;font-weight:normal;letter-spacing:0px">0.40021304</div>
<div class="t" style="left:428.00px;top:627.87px;width:200px;text-align:center;font-size:11.5px;color:#2a2a2a;font-weight:normal;letter-spacing:0px">200.00 nm</div>
<div class="a" style="left:21px;top:658px;width:59px;height:18px;background:#f0f6fd;border-radius:2px"></div>
<div class="t" style="left:32.00px;top:661.69px;font-size:11px;color:#4a6cc4;font-weight:normal;letter-spacing:0px;">Append</div>
<div class="t" style="left:101.30px;top:661.69px;font-size:11px;color:#c6c6c6;font-weight:normal;letter-spacing:0px;">Insert</div>
<div class="t" style="left:161.00px;top:661.69px;font-size:11px;color:#c6c6c6;font-weight:normal;letter-spacing:0px;">Delete</div>
<div class="t" style="left:223.80px;top:661.69px;font-size:11px;color:#c6c6c6;font-weight:normal;letter-spacing:0px;">Copy</div>
<svg class="a" style="left:269.3px;top:661px" width="13" height="12" viewBox="0 0 13 12"><rect x="0.7" y="0.7" width="10.8" height="10.6" rx="1" fill="#fff" stroke="#d2d2d2" stroke-width="1.2"/><path d="M6 1.8 L8.8 4.8 H7.1 V9.4 H4.9 V4.8 H3.2 Z" fill="#c8c8c8"/></svg>
<svg class="a" style="left:293.3px;top:661px" width="13" height="12" viewBox="0 0 13 12"><rect x="0.7" y="0.7" width="10.8" height="10.6" rx="1" fill="#fff" stroke="#d2d2d2" stroke-width="1.2"/><path d="M6 9.6 L8.8 6.6 H7.1 V2 H4.9 V6.6 H3.2 Z" fill="#c8c8c8"/></svg>
<div class="a" style="left:315px;top:658px;width:84px;height:18px;border:1px solid #555;border-radius:3px;background:#fff"></div>
<div class="t" style="left:322.80px;top:661.69px;font-size:11px;color:#4a6cc4;font-weight:normal;letter-spacing:0px;">Layer Tools</div>
<svg class="a" style="left:379.5px;top:664px" width="11" height="7" viewBox="0 0 11 7"><path d="M1 1 L5.5 5.5 L10 1" stroke="#4a6cc4" stroke-width="1.2" fill="none"/></svg>
<div class="a" style="left:408px;top:658px;width:74px;height:18px;border:1px solid #555;border-radius:3px;background:#fff"></div>
<div class="t" style="left:413.60px;top:661.69px;font-size:11px;color:#4a6cc4;font-weight:normal;letter-spacing:0px;">Lock</div>
<svg class="a" style="left:464.5px;top:664px" width="11" height="7" viewBox="0 0 11 7"><path d="M1 1 L5.5 5.5 L10 1" stroke="#4a6cc4" stroke-width="1.2" fill="none"/></svg>
<div class="a" style="left:491px;top:658px;width:74px;height:18px;border:1px solid #555;border-radius:3px;background:#fff"></div>
<div class="t" style="left:502.40px;top:661.69px;font-size:11px;color:#4a6cc4;font-weight:normal;letter-spacing:0px;">Group</div>
<svg class="a" style="left:542px;top:664px" width="11" height="7" viewBox="0 0 11 7"><path d="M1 1 L5.5 5.5 L10 1" stroke="#4a6cc4" stroke-width="1.2" fill="none"/></svg>
<div class="a" style="left:621px;top:92px;width:760px;height:534px;background:#f4f4f4"></div>
<div class="a" style="left:1377px;top:100px;width:4px;height:526px;background:#e6e6e6"></div>
<div class="a" style="left:624px;top:97px;width:753px;height:528px;background:#fff"></div>
<div class="a" style="left:625px;top:98px;width:752px;height:527px;background:#1d4fa3"></div>
<div class="a" style="left:625px;top:98px;width:752px;height:1px;background:#0e459e"></div>
<div class="a" style="left:626px;top:120px;width:750px;height:504px;background:#fff"></div>
<div class="t" style="left:635.80px;top:101.45px;font-size:14px;color:#fff;font-weight:bold;letter-spacing:0px;">Plot Chart [8.</div>
<svg class="a" style="left:724.0px;top:103.5px;overflow:visible" width="83.9" height="12.7"><g transform="scale(0.9076923076923078)" fill="none" stroke="#fff" stroke-width="1.87" stroke-linecap="butt"><path transform="translate(0.00,0)" d="M6.5 0.3 L7.2 2.2 M1 3.3 H12 M3.6 5.2 L5 9.6 M9.6 5 L8 9.8 M0.3 11.6 H12.7"/><path transform="translate(14.54,0)" d="M3.6 0.3 L0.4 6.2 M2.4 3.6 V12.8 M4.8 3.6 H12.7 M8.8 0.3 V12.8 M8.6 3.8 L4.8 10.2 M9 3.8 L12.7 10 M6.8 9.8 H10.8"/><path transform="translate(29.08,0)" d="M3.4 0.3 L0.4 6.2 M2.3 3.6 V12.8 M8.6 0.3 V1.8 M5.3 2 H12.5 V5.4 H5.6 M5.6 2 V6.5 L4.6 12.8 M6.6 7 H12.4 V12.8 M6.6 7 V12.8 M8.5 7 V12.5 M10.5 7 V12.5 M6.6 9.7 H12.4"/><path transform="translate(43.63,0)" d="M0.2 4 H4.4 M2.3 0.3 V12.2 L1.2 11.4 M0.2 9.2 L4.4 7.2 M5.2 1.5 H12.7 M5.7 1.5 V8 L4.6 12.8 M7.2 4.4 H11.8 M6.6 7 H12.7 M7.8 7 V12.6 M9.2 7 L12.7 12.6 M12.2 8.2 L10.2 9.8"/><path transform="translate(58.17,0)" d="M5 0.3 L0.3 6 M8 0.3 L12.7 6 M3 6.6 H10.6 V11.4 Q10.6 12.6 9 12.6 M6.2 6.6 Q5.8 11 1.8 12.8"/><path transform="translate(72.71,0)" d="M0.5 3 H12.5 M6.5 0.3 V12.8 M2.6 5.1 H10.4 V8.6 H2.6 Z M6.4 8.6 L0.8 12.2 M6.6 8.6 L12.2 12.2"/><path transform="translate(87.25,0)" d="M1.2 0.6 H5.4 V3.8 H1.2 Z M7.6 0.6 H11.8 V3.8 H7.6 Z M0.4 6 H12.6 M6.5 3.8 V6 L1.5 8.2 M6.5 6 L11.5 8.2 M9.6 4.4 L10.6 5.4 M1.2 8.8 H5.4 V12.4 H1.2 Z M7.6 8.8 H11.8 V12.4 H7.6 Z"/></g></svg>
<div class="t" style="left:816.60px;top:101.45px;font-size:14px;color:#fff;font-weight:bold;letter-spacing:0px;">]</div>
<div class="a" style="left:1301.4px;top:107.5px;width:12.4px;height:1.7px;background:#fff"></div>
<div class="a" style="left:1329.1px;top:102.9px;width:11.9px;height:11.9px;border:2px solid #fff;border-radius:2.5px"></div>
<svg class="a" style="left:1356px;top:103px" width="13" height="12" viewBox="0 0 13 12"><path d="M2.3 1.8 L10.7 10.1 M10.7 1.8 L2.3 10.1" stroke="#fff" stroke-width="1.8" stroke-linecap="square"/></svg>
<div class="a" style="left:626px;top:144px;width:731px;height:2px;background:#dadada"></div>
<div class="a" style="left:1357px;top:120px;width:1px;height:504px;background:#e6e6e6"></div>
<div class="t" style="left:635.50px;top:127.64px;font-size:12px;color:#3d5ba8;font-weight:normal;letter-spacing:0px;">Diagram</div>
<div class="a" style="left:635px;top:144px;width:47px;height:2px;background:#1d4fa3"></div>
<div class="t" style="left:701.30px;top:127.64px;font-size:12px;color:#3a3a3a;font-weight:normal;letter-spacing:0px;">Table</div>
<div class="t" style="left:749.40px;top:127.64px;font-size:12px;color:#3a3a3a;font-weight:normal;letter-spacing:0px;">Calculation</div>
<svg class="a" style="left:1359px;top:375px" width="17" height="14" viewBox="0 0 17 14"><path d="M7.6 1 L1.8 6.8 L7.6 12.6 M14.6 1 L8.8 6.8 L14.6 12.6" stroke="#2d62c8" stroke-width="1.9" fill="none"/></svg>
<div class="a" style="left:626px;top:605px;width:731px;height:1px;background:#e8e8e8"></div>
<svg class="a" style="left:994px;top:607px" width="15" height="16" viewBox="0 0 15 16"><path d="M1.5 7.5 L7.5 1.8 L13.5 7.5 M1.5 14 L7.5 8.3 L13.5 14" stroke="#2d62c8" stroke-width="1.8" fill="none"/></svg>
<svg class="a" style="left:0;top:0" width="1384" height="723"><rect x="634" y="154.5" width="61" height="393.5" fill="#fbfbfb"/><rect x="697" y="549" width="546" height="48" fill="#fcfcfc"/><line x1="714.52" y1="153.06" x2="714.52" y2="547" stroke="#ececec" stroke-width="1" stroke-dasharray="5.4 6.037"/><line x1="732.74" y1="153.06" x2="732.74" y2="547" stroke="#ececec" stroke-width="1" stroke-dasharray="5.4 6.037"/><line x1="750.96" y1="153.06" x2="750.96" y2="547" stroke="#ececec" stroke-width="1" stroke-dasharray="5.4 6.037"/><line x1="769.18" y1="153.06" x2="769.18" y2="547" stroke="#ececec" stroke-width="1" stroke-dasharray="5.4 6.037"/><line x1="787.40" y1="153.06" x2="787.40" y2="547" stroke="#ececec" stroke-width="1" stroke-dasharray="5.4 6.037"/><line x1="805.62" y1="153.06" x2="805.62" y2="547" stroke="#ececec" stroke-width="1" stroke-dasharray="5.4 6.037"/><line x1="823.84" y1="153.06" x2="823.84" y2="547" stroke="#ececec" stroke-width="1" stroke-dasharray="5.4 6.037"/><line x1="842.06" y1="153.06" x2="842.06" y2="547" stroke="#ececec" stroke-width="1" stroke-dasharray="5.4 6.037"/><line x1="860.28" y1="153.06" x2="860.28" y2="547" stroke="#ececec" stroke-width="1" stroke-dasharray="5.4 6.037"/><line x1="878.50" y1="153.06" x2="878.50" y2="547" stroke="#ececec" stroke-width="1" stroke-dasharray="5.4 6.037"/><line x1="896.72" y1="153.06" x2="896.72" y2="547" stroke="#ececec" stroke-width="1" stroke-dasharray="5.4 6.037"/><line x1="914.94" y1="153.06" x2="914.94" y2="547" stroke="#ececec" stroke-width="1" stroke-dasharray="5.4 6.037"/><line x1="933.16" y1="153.06" x2="933.16" y2="547" stroke="#ececec" stroke-width="1" stroke-dasharray="5.4 6.037"/><line x1="951.38" y1="153.06" x2="951.38" y2="547" stroke="#ececec" stroke-width="1" stroke-dasharray="5.4 6.037"/><line x1="969.60" y1="153.06" x2="969.60" y2="547" stroke="#ececec" stroke-width="1" stroke-dasharray="5.4 6.037"/><line x1="987.82" y1="153.06" x2="987.82" y2="547" stroke="#ececec" stroke-width="1" stroke-dasharray="5.4 6.037"/><line x1="1006.04" y1="153.06" x2="1006.04" y2="547" stroke="#ececec" stroke-width="1" stroke-dasharray="5.4 6.037"/><line x1="1024.26" y1="153.06" x2="1024.26" y2="547" stroke="#ececec" stroke-width="1" stroke-dasharray="5.4 6.037"/><line x1="1042.48" y1="153.06" x2="1042.48" y2="547" stroke="#ececec" stroke-width="1" stroke-dasharray="5.4 6.037"/><line x1="1060.70" y1="153.06" x2="1060.70" y2="547" stroke="#ececec" stroke-width="1" stroke-dasharray="5.4 6.037"/><line x1="1078.92" y1="153.06" x2="1078.92" y2="547" stroke="#ececec" stroke-width="1" stroke-dasharray="5.4 6.037"/><line x1="1097.14" y1="153.06" x2="1097.14" y2="547" stroke="#ececec" stroke-width="1" stroke-dasharray="5.4 6.037"/><line x1="1115.36" y1="153.06" x2="1115.36" y2="547" stroke="#ececec" stroke-width="1" stroke-dasharray="5.4 6.037"/><line x1="1133.58" y1="153.06" x2="1133.58" y2="547" stroke="#ececec" stroke-width="1" stroke-dasharray="5.4 6.037"/><line x1="1151.80" y1="153.06" x2="1151.80" y2="547" stroke="#ececec" stroke-width="1" stroke-dasharray="5.4 6.037"/><line x1="1170.02" y1="153.06" x2="1170.02" y2="547" stroke="#ececec" stroke-width="1" stroke-dasharray="5.4 6.037"/><line x1="1188.24" y1="153.06" x2="1188.24" y2="547" stroke="#ececec" stroke-width="1" stroke-dasharray="5.4 6.037"/><line x1="1206.46" y1="153.06" x2="1206.46" y2="547" stroke="#ececec" stroke-width="1" stroke-dasharray="5.4 6.037"/><line x1="1224.68" y1="153.06" x2="1224.68" y2="547" stroke="#ececec" stroke-width="1" stroke-dasharray="5.4 6.037"/><line x1="695.7" y1="544.60" x2="1242" y2="544.60" stroke="#ececec" stroke-width="1" stroke-dasharray="5.8 5.676"/><line x1="695.7" y1="505.97" x2="1242" y2="505.97" stroke="#ececec" stroke-width="1" stroke-dasharray="5.8 5.676"/><line x1="695.7" y1="467.34" x2="1242" y2="467.34" stroke="#ececec" stroke-width="1" stroke-dasharray="5.8 5.676"/><line x1="695.7" y1="428.71" x2="1242" y2="428.71" stroke="#ececec" stroke-width="1" stroke-dasharray="5.8 5.676"/><line x1="695.7" y1="390.08" x2="1242" y2="390.08" stroke="#ececec" stroke-width="1" stroke-dasharray="5.8 5.676"/><line x1="695.7" y1="351.45" x2="1242" y2="351.45" stroke="#ececec" stroke-width="1" stroke-dasharray="5.8 5.676"/><line x1="695.7" y1="312.82" x2="1242" y2="312.82" stroke="#ececec" stroke-width="1" stroke-dasharray="5.8 5.676"/><line x1="695.7" y1="274.19" x2="1242" y2="274.19" stroke="#ececec" stroke-width="1" stroke-dasharray="5.8 5.676"/><line x1="695.7" y1="235.56" x2="1242" y2="235.56" stroke="#ececec" stroke-width="1" stroke-dasharray="5.8 5.676"/><line x1="695.7" y1="196.93" x2="1242" y2="196.93" stroke="#ececec" stroke-width="1" stroke-dasharray="5.8 5.676"/><rect x="696" y="154" width="547" height="1.8" fill="#aab6c4"/><rect x="1242.2" y="154" width="1.8" height="394" fill="#aab6c4"/><rect x="695" y="154" width="2" height="394" fill="#d4d8de"/><rect x="695" y="546.8" width="549" height="2" fill="#d4d8de"/><rect x="689" y="544.10" width="6" height="1.2" fill="#8a8a8a"/><rect x="689" y="505.47" width="6" height="1.2" fill="#8a8a8a"/><rect x="689" y="466.84" width="6" height="1.2" fill="#8a8a8a"/><rect x="689" y="428.21" width="6" height="1.2" fill="#8a8a8a"/><rect x="689" y="389.58" width="6" height="1.2" fill="#8a8a8a"/><rect x="689" y="350.95" width="6" height="1.2" fill="#8a8a8a"/><rect x="689" y="312.32" width="6" height="1.2" fill="#8a8a8a"/><rect x="689" y="273.69" width="6" height="1.2" fill="#8a8a8a"/><rect x="689" y="235.06" width="6" height="1.2" fill="#8a8a8a"/><rect x="689" y="196.43" width="6" height="1.2" fill="#8a8a8a"/><rect x="689" y="157.80" width="6" height="1.2" fill="#8a8a8a"/><text x="684" y="550.40" text-anchor="end" font-size="13.4" fill="#4d4d4d" font-family="Liberation Sans">0</text><text x="684" y="473.14" text-anchor="end" font-size="13.4" fill="#4d4d4d" font-family="Liberation Sans">20</text><text x="684" y="395.88" text-anchor="end" font-size="13.4" fill="#4d4d4d" font-family="Liberation Sans">40</text><text x="684" y="318.62" text-anchor="end" font-size="13.4" fill="#4d4d4d" font-family="Liberation Sans">60</text><text x="684" y="241.36" text-anchor="end" font-size="13.4" fill="#4d4d4d" font-family="Liberation Sans">80</text><text x="684" y="164.10" text-anchor="end" font-size="13.4" fill="#4d4d4d" font-family="Liberation Sans">100</text><rect x="695.70" y="548.5" width="1.2" height="7" fill="#8a8a8a"/><rect x="713.92" y="548.5" width="1.2" height="4.5" fill="#8a8a8a"/><rect x="732.14" y="548.5" width="1.2" height="4.5" fill="#8a8a8a"/><rect x="750.36" y="548.5" width="1.2" height="4.5" fill="#8a8a8a"/><rect x="768.58" y="548.5" width="1.2" height="4.5" fill="#8a8a8a"/><rect x="786.80" y="548.5" width="1.2" height="7" fill="#8a8a8a"/><rect x="805.02" y="548.5" width="1.2" height="4.5" fill="#8a8a8a"/><rect x="823.24" y="548.5" width="1.2" height="4.5" fill="#8a8a8a"/><rect x="841.46" y="548.5" width="1.2" height="4.5" fill="#8a8a8a"/><rect x="859.68" y="548.5" width="1.2" height="4.5" fill="#8a8a8a"/><rect x="877.90" y="548.5" width="1.2" height="7" fill="#8a8a8a"/><rect x="896.12" y="548.5" width="1.2" height="4.5" fill="#8a8a8a"/><rect x="914.34" y="548.5" width="1.2" height="4.5" fill="#8a8a8a"/><rect x="932.56" y="548.5" width="1.2" height="4.5" fill="#8a8a8a"/><rect x="950.78" y="548.5" width="1.2" height="4.5" fill="#8a8a8a"/><rect x="969.00" y="548.5" width="1.2" height="7" fill="#8a8a8a"/><rect x="987.22" y="548.5" width="1.2" height="4.5" fill="#8a8a8a"/><rect x="1005.44" y="548.5" width="1.2" height="4.5" fill="#8a8a8a"/><rect x="1023.66" y="548.5" width="1.2" height="4.5" fill="#8a8a8a"/><rect x="1041.88" y="548.5" width="1.2" height="4.5" fill="#8a8a8a"/><rect x="1060.10" y="548.5" width="1.2" height="7" fill="#8a8a8a"/><rect x="1078.32" y="548.5" width="1.2" height="4.5" fill="#8a8a8a"/><rect x="1096.54" y="548.5" width="1.2" height="4.5" fill="#8a8a8a"/><rect x="1114.76" y="548.5" width="1.2" height="4.5" fill="#8a8a8a"/><rect x="1132.98" y="548.5" width="1.2" height="4.5" fill="#8a8a8a"/><rect x="1151.20" y="548.5" width="1.2" height="7" fill="#8a8a8a"/><rect x="1169.42" y="548.5" width="1.2" height="4.5" fill="#8a8a8a"/><rect x="1187.64" y="548.5" width="1.2" height="4.5" fill="#8a8a8a"/><rect x="1205.86" y="548.5" width="1.2" height="4.5" fill="#8a8a8a"/><rect x="1224.08" y="548.5" width="1.2" height="4.5" fill="#8a8a8a"/><rect x="1242.30" y="548.5" width="1.2" height="7" fill="#8a8a8a"/><text x="695.80" y="570" text-anchor="start" font-size="13.3" fill="#4d4d4d" font-family="Liberation Sans">400</text><text x="787.40" y="570" text-anchor="middle" font-size="13.3" fill="#4d4d4d" font-family="Liberation Sans">450</text><text x="878.50" y="570" text-anchor="middle" font-size="13.3" fill="#4d4d4d" font-family="Liberation Sans">500</text><text x="969.60" y="570" text-anchor="middle" font-size="13.3" fill="#4d4d4d" font-family="Liberation Sans">550</text><text x="1060.70" y="570" text-anchor="middle" font-size="13.3" fill="#4d4d4d" font-family="Liberation Sans">600</text><text x="1151.80" y="570" text-anchor="middle" font-size="13.3" fill="#4d4d4d" font-family="Liberation Sans">650</text><text x="1243.70" y="570" text-anchor="end" font-size="13.3" fill="#4d4d4d" font-family="Liberation Sans">700</text><text x="910.8" y="587" font-size="14" fill="#4d4d4d" letter-spacing="0.7" font-family="Liberation Sans">Wavelength [nm]</text><text transform="translate(652.9,449) rotate(-90)" x="0" y="0" font-size="14" fill="#4d4d4d" letter-spacing="0.6" font-family="Liberation Sans">Transmittance Magnitude [%]</text><path d="M697.00 159.20 C700.83 159.35 710.83 160.22 720.00 160.10 C729.17 159.98 740.83 158.50 752.00 158.50 C763.17 158.50 772.33 160.12 787.00 160.10 C801.67 160.08 820.33 158.32 840.00 158.40 C859.67 158.48 883.33 160.57 905.00 160.60 C926.67 160.63 952.50 158.92 970.00 158.60 C987.50 158.28 996.67 158.50 1010.00 158.70 C1023.33 158.90 1035.00 159.78 1050.00 159.80 C1065.00 159.82 1083.33 158.97 1100.00 158.80 C1116.67 158.63 1133.33 158.63 1150.00 158.80 C1166.67 158.97 1184.50 159.60 1200.00 159.80 C1215.50 160.00 1235.83 159.97 1243.00 160.00" stroke="#3c9a8c" stroke-width="2" fill="none"/><path d="M697.00 537.70 C700.00 538.32 707.83 540.55 715.00 541.40 C722.17 542.25 730.83 542.65 740.00 542.80 C749.17 542.95 759.17 542.88 770.00 542.30 C780.83 541.72 795.00 539.37 805.00 539.30 C815.00 539.23 819.17 541.15 830.00 541.90 C840.83 542.65 848.33 543.55 870.00 543.80 C891.67 544.05 938.33 543.83 960.00 543.40 C981.67 542.97 989.17 541.73 1000.00 541.20 C1010.83 540.67 1015.00 540.13 1025.00 540.20 C1035.00 540.27 1047.50 541.17 1060.00 541.60 C1072.50 542.03 1085.00 542.63 1100.00 542.80 C1115.00 542.97 1133.33 542.87 1150.00 542.60 C1166.67 542.33 1184.50 541.92 1200.00 541.20 C1215.50 540.48 1235.83 538.78 1243.00 538.30" stroke="#f29e38" stroke-width="2" fill="none"/><path d="M1147.5 177.5 L1154.5 184.5 M1154.5 177.5 L1147.5 184.5" stroke="#e8413a" stroke-width="1.2"/></svg>
<div class="t" style="left:1027.00px;top:188.77px;font-size:11.5px;color:#3a3a3a;font-weight:normal;letter-spacing:0px;">Range: 400.000 - 700.000</div>
<div class="t" style="left:1027.00px;top:208.07px;font-size:11.5px;color:#3a3a3a;font-weight:normal;letter-spacing:0px;">T P-pol (45deg)</div>
<div class="t" style="left:1027.00px;top:227.07px;font-size:11.5px;color:#3a3a3a;font-weight:normal;letter-spacing:0px;">Average Value = 99.782</div>
<div class="t" style="left:1027.00px;top:245.97px;font-size:11.5px;color:#3a3a3a;font-weight:normal;letter-spacing:0px;">T S-pol (45deg)</div>
<div class="t" style="left:1027.00px;top:264.97px;font-size:11.5px;color:#3a3a3a;font-weight:normal;letter-spacing:0px;">Average Value = 0.584</div>
<div class="a" style="left:1232.5px;top:149.5px;width:118.5px;height:72.5px;background:#fff;border:1.3px solid #c9d2dc;border-radius:6px"></div>
<div class="t" style="left:1243.40px;top:159.13px;font-size:12.6px;color:#222;font-weight:bold;letter-spacing:0px;">Legend</div>
<svg class="a" style="left:1240px;top:180px" width="14" height="34"><circle cx="6.8" cy="6.3" r="4.6" fill="#3c9a8c"/><circle cx="6.8" cy="27.2" r="4.6" fill="#f29e38"/></svg>
<div class="t" style="left:1257.60px;top:179.64px;font-size:12px;color:#4d4d4d;font-weight:normal;letter-spacing:0px;">T P-pol (45deg)</div>
<div class="t" style="left:1257.60px;top:200.64px;font-size:12px;color:#4d4d4d;font-weight:normal;letter-spacing:0px;">T S-pol (45deg)</div>
</body></html>
